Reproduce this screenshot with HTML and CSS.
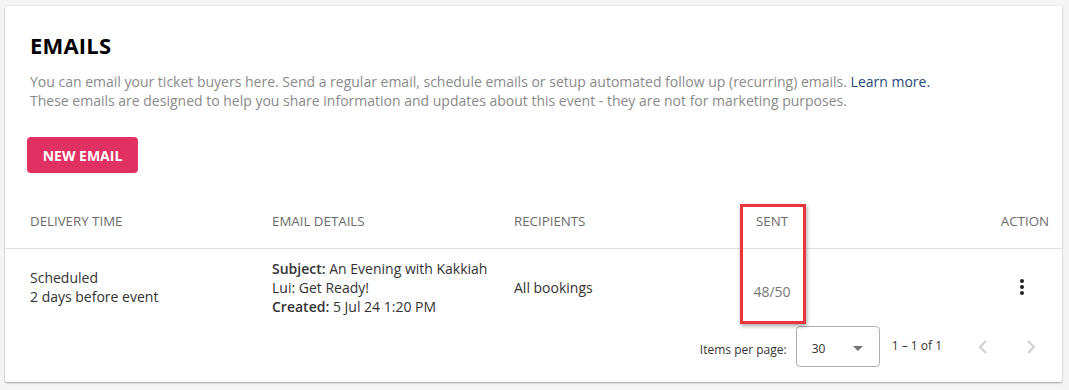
FILE: index.html
```html
<!DOCTYPE html>
<html lang="en">
<head>
    <meta charset="UTF-8">
    <meta name="viewport" content="width=device-width, initial-scale=1.0">
    <title>Emails</title>
    <link rel="stylesheet" href="styles.css">
</head>
<body>
    <div class="card">
        <h1 class="title">EMAILS</h1>
        <p class="intro">
            You can email your ticket buyers here. Send a regular email, schedule emails or setup automated follow up (recurring) emails. <a href="#" class="learn">Learn more.</a><br>
            These emails are designed to help you share information and updates about this event - they are not for marketing purposes.
        </p>

        <button class="new-btn">NEW EMAIL</button>

        <div class="table">
            <div class="row head">
                <div class="cell">DELIVERY TIME</div>
                <div class="cell">EMAIL DETAILS</div>
                <div class="cell">RECIPIENTS</div>
                <div class="cell center">SENT</div>
                <div class="cell right">ACTION</div>
            </div>
            <div class="row body">
                <div class="cell">Scheduled<br>2 days before event</div>
                <div class="cell"><b>Subject:</b> An Evening with Kakkiah Lui: Get Ready!<br><b>Created:</b> 5 Jul 24 1:20 PM</div>
                <div class="cell">All bookings</div>
                <div class="cell center sent">48/50</div>
                <div class="cell right">
                    <button class="dots" aria-label="More">
                        <svg width="4" height="16" viewBox="0 0 4 16"><circle cx="2" cy="2" r="2"/><circle cx="2" cy="8" r="2"/><circle cx="2" cy="14" r="2"/></svg>
                    </button>
                </div>
            </div>
        </div>

        <div class="paginator">
            <span class="per-label">Items per page:</span>
            <div class="select">
                <span>30</span>
                <svg width="10" height="5" viewBox="0 0 10 5"><path d="M0 0h10L5 5z" fill="#757575"/></svg>
            </div>
            <span class="range">1 – 1 of 1</span>
            <div class="nav">
                <svg width="10" height="16" viewBox="0 0 10 16"><path d="M8 2L2 8l6 6" fill="none" stroke="#d0d0d0" stroke-width="2"/></svg>
            </div>
            <div class="nav">
                <svg width="10" height="16" viewBox="0 0 10 16"><path d="M2 2l6 6-6 6" fill="none" stroke="#d0d0d0" stroke-width="2"/></svg>
            </div>
        </div>

        <div class="highlight"></div>
    </div>
</body>
</html>
```

FILE: styles.css
```css
* {
    margin: 0;
    padding: 0;
    box-sizing: border-box;
}

body {
    font-family: 'Open Sans', 'Noto Sans', sans-serif;
    background: #f5f5f5;
    color: #333;
    padding: 6px 7px 0 5px;
    height: 100vh;
    overflow: hidden;
}

.card {
    position: relative;
    background: #fff;
    height: 376px;
    border-radius: 2px;
    box-shadow: 0 1px 2px rgba(0, 0, 0, 0.35), 0 0 2px rgba(0, 0, 0, 0.06);
    padding-top: 24px;
}

.title {
    font-size: 22px;
    line-height: 30px;
    font-weight: 700;
    color: #000;
    padding-left: 25px;
    letter-spacing: 0.2px;
}

.intro {
    margin-top: 12px;
    padding-left: 25px;
    font-size: 14px;
    line-height: 19px;
    color: #8a8a8a;
}

.learn {
    color: #1e4a7a;
    text-decoration: none;
}

/* New email button */
.new-btn {
    margin: 27px 0 0 22px;
    height: 36px;
    width: 111px;
    border: none;
    border-radius: 4px;
    background: #e03162;
    color: #fff;
    font-family: inherit;
    font-size: 14px;
    font-weight: 700;
}

/* Table */
.table {
    margin-top: 34px;
}

.row {
    display: grid;
    grid-template-columns: 242px 242px 212px 92px 1fr;
    padding: 0 13px 0 25px;
    align-items: center;
}

.head {
    height: 42px;
    border-bottom: 1px solid #e0e0e0;
    font-size: 13.3px;
    color: #6b6b6b;
    align-items: start;
    padding-top: 5px;
}

.body {
    height: 76px;
    font-size: 14px;
    line-height: 19px;
    color: #333;
}

.body b {
    font-weight: 600;
}

.cell.center {
    text-align: center;
}

.cell.right {
    display: flex;
    justify-content: flex-end;
}

.head .cell.right {
    display: block;
    text-align: right;
}

.sent {
    font-size: 14px;
    color: #777;
    padding-top: 8px;
}

.dots {
    width: 40px;
    height: 40px;
    margin-right: 7px;
    border: none;
    background: none;
    display: flex;
    align-items: center;
    justify-content: center;
    fill: #222;
}

/* Paginator */
.paginator {
    display: flex;
    align-items: center;
    justify-content: flex-end;
    height: 42px;
    padding-right: 7px;
    font-size: 12px;
    color: #333;
}

.per-label {
    margin-right: 9px;
    padding-top: 6px;
}

.select {
    width: 84px;
    height: 41px;
    border: 1px solid #b0b0b0;
    border-radius: 4px;
    display: flex;
    align-items: center;
    justify-content: space-between;
    padding: 4px 16px 0 15px;
    font-size: 12px;
}

.range {
    margin-left: 12px;
    margin-right: 17px;
    padding-bottom: 2px;
}

.nav {
    width: 48px;
    height: 40px;
    display: flex;
    align-items: center;
    justify-content: center;
    padding-top: 2px;
}

.highlight {
    position: absolute;
    left: 735px;
    top: 198px;
    width: 66px;
    height: 120px;
    border: 3px solid #e8353f;
    box-shadow: 1px 2px 4px rgba(0, 0, 0, 0.35);
    pointer-events: none;
}
```
